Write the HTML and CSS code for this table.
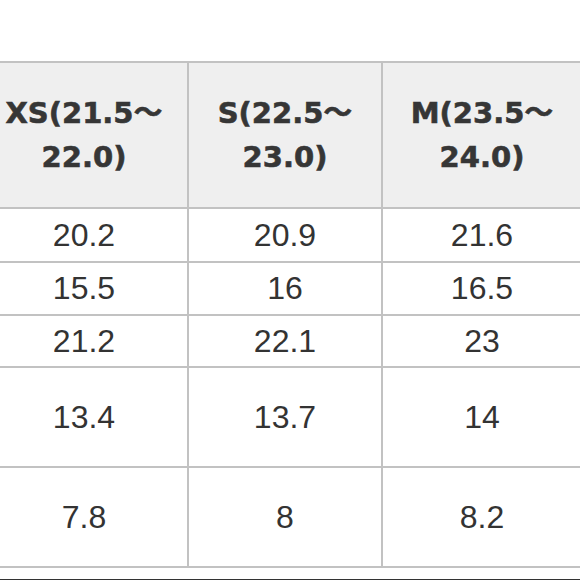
FILE: index.html
```html
<!DOCTYPE html>
<html>
<head>
<meta charset="utf-8">
<link rel="stylesheet" href="styles.css">
</head>
<body>
<div class="page">
  <table class="size-table">
    <colgroup>
      <col class="c1">
      <col class="c2">
      <col class="c3">
    </colgroup>
    <thead>
      <tr class="head">
        <th>XS(21.5～<br>22.0)</th>
        <th>S(22.5～<br>23.0)</th>
        <th>M(23.5～<br>24.0)</th>
      </tr>
    </thead>
    <tbody>
      <tr class="r1"><td>20.2</td><td>20.9</td><td>21.6</td></tr>
      <tr class="r2"><td>15.5</td><td>16</td><td>16.5</td></tr>
      <tr class="r3"><td>21.2</td><td>22.1</td><td>23</td></tr>
      <tr class="r4"><td>13.4</td><td>13.7</td><td>14</td></tr>
      <tr class="r5"><td>7.8</td><td>8</td><td>8.2</td></tr>
    </tbody>
  </table>
  <div class="bottom-rule"></div>
</div>
</body>
</html>
```
FILE: styles.css
```css
html, body {
  margin: 0;
  padding: 0;
  background: #ffffff;
  overflow: hidden;
}
.page {
  width: 580px;
  height: 580px;
  overflow: hidden;
  padding-top: 61px;
  box-sizing: border-box;
}
.size-table {
  border-collapse: collapse;
  table-layout: fixed;
  width: 602px;
  margin-left: -21px;
}
.c1 { width: 208px; }
.c2 { width: 194px; }
.c3 { width: 200px; }
.size-table th,
.size-table td {
  border: 2px solid #c2c2c2;
  text-align: center;
  vertical-align: middle;
  padding: 0;
}
.size-table th {
  background: #efefef;
  font-family: "DejaVu Sans", "Noto Sans CJK JP", sans-serif;
  font-weight: 700;
  font-size: 29px;
  line-height: 44px;
  color: #363636;
  -webkit-text-stroke: 0.6px #363636;
}
.size-table td {
  font-family: "Liberation Sans", Arial, sans-serif;
  font-size: 32px;
  color: #333333;
  background: #ffffff;
}
.head { height: 146px; }
.r1 { height: 54px; }
.r2 { height: 53px; }
.r3 { height: 52px; }
.r4 { height: 100px; }
.r5 { height: 100px; }
.bottom-rule {
  margin-top: 11px;
  border-top: 2px solid #333333;
}
```
